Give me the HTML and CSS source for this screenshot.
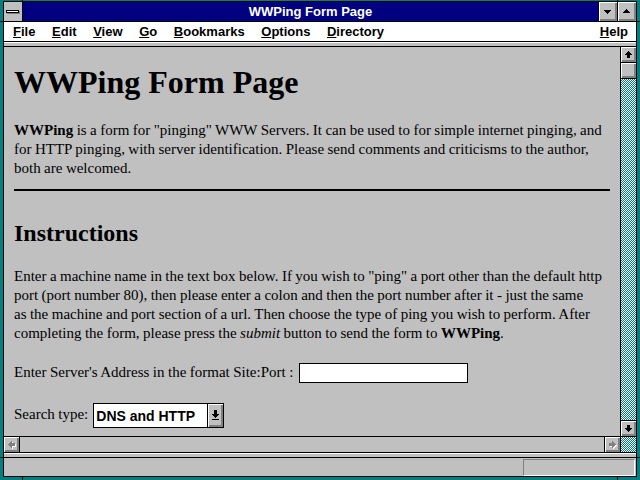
FILE: index.html
```html
<!DOCTYPE html>
<html>
<head lang="en">
    <meta charset="UTF-8">
    <title>WWPing Form Page</title>
    <link rel="stylesheet" href="styles.css">
</head>
<body>
<div id="frame">
    <div id="window">
        <div id="title-bar">
            <div class="sys-menu"><span class="sys-bar"></span></div>
            <div class="caption">WWPing Form Page</div>
            <div class="cap-btn">
                <svg width="18" height="19" viewBox="0 0 18 19" shape-rendering="crispEdges">
                    <rect x="5" y="8" width="7" height="1"/>
                    <rect x="6" y="9" width="5" height="1"/>
                    <rect x="7" y="10" width="3" height="1"/>
                    <rect x="8" y="11" width="1" height="1"/>
                </svg>
            </div>
            <div class="cap-btn">
                <svg width="18" height="19" viewBox="0 0 18 19" shape-rendering="crispEdges">
                    <rect x="8" y="7" width="1" height="1"/>
                    <rect x="7" y="8" width="3" height="1"/>
                    <rect x="6" y="9" width="5" height="1"/>
                    <rect x="5" y="10" width="7" height="1"/>
                </svg>
            </div>
        </div>
        <div id="menu-bar">
            <span class="menu-item"><u>F</u>ile</span>
            <span class="menu-item"><u>E</u>dit</span>
            <span class="menu-item"><u>V</u>iew</span>
            <span class="menu-item"><u>G</u>o</span>
            <span class="menu-item"><u>B</u>ookmarks</span>
            <span class="menu-item"><u>O</u>ptions</span>
            <span class="menu-item"><u>D</u>irectory</span>
            <span class="menu-item help"><u>H</u>elp</span>
        </div>
        <div class="strip"></div>
        <div id="main">
            <div id="content">
                <h1>WWPing Form Page</h1>
                <p class="intro"><b>WWPing</b> is a form for "pinging" WWW Servers. It can be used to for simple internet pinging, and<br>
                    for HTTP pinging, with server identification. Please send comments and criticisms to the author,<br>
                    both are welcomed.</p>
                <hr>
                <h2>Instructions</h2>
                <p class="instr">Enter a machine name in the text box below. If you wish to "ping" a port other than the default http<br>
                    port (port number 80), then please enter a colon and then the port number after it - just the same<br>
                    as the machine and port section of a url. Then choose the type of ping you wish to perform. After<br>
                    completing the form, please press the <i>submit</i> button to send the form to <b>WWPing</b>.</p>
                <form class="ping-form">
                    <div class="row row-site">
                        <label for="site">Enter Server's Address in the format Site:Port :</label>
                        <input id="site" class="site-input" type="text">
                    </div>
                    <div class="row row-type">
                        <label for="type">Search type:</label>
                        <div class="select">
                            <select id="type">
                                <option>DNS and HTTP</option>
                                <option>DNS only</option>
                                <option>HTTP only</option>
                            </select>
                            <span class="drop-btn">
                                <svg width="15" height="23" viewBox="0 0 15 23" shape-rendering="crispEdges">
                                    <rect x="6" y="6" width="3" height="4"/>
                                    <rect x="4" y="10" width="7" height="1"/>
                                    <rect x="5" y="11" width="5" height="1"/>
                                    <rect x="6" y="12" width="3" height="1"/>
                                    <rect x="7" y="13" width="1" height="1"/>
                                    <rect x="4" y="15" width="7" height="1"/>
                                </svg>
                            </span>
                        </div>
                    </div>
                </form>
            </div>
            <div class="vscroll">
                <div class="sb-btn sb-up">
                    <svg width="15" height="15" viewBox="0 0 15 15" shape-rendering="crispEdges">
                        <rect x="7" y="4" width="1" height="1"/>
                        <rect x="6" y="5" width="3" height="1"/>
                        <rect x="5" y="6" width="5" height="1"/>
                        <rect x="4" y="7" width="7" height="1"/>
                        <rect x="6" y="8" width="3" height="3"/>
                    </svg>
                </div>
                <div class="sb-btn sb-thumb"></div>
                <div class="sb-track"></div>
                <div class="sb-btn sb-down">
                    <svg width="15" height="15" viewBox="0 0 15 15" shape-rendering="crispEdges">
                        <rect x="6" y="4" width="3" height="3"/>
                        <rect x="4" y="7" width="7" height="1"/>
                        <rect x="5" y="8" width="5" height="1"/>
                        <rect x="6" y="9" width="3" height="1"/>
                        <rect x="7" y="10" width="1" height="1"/>
                    </svg>
                </div>
            </div>
        </div>
        <div class="hscroll">
            <div class="sb-btn sb-left">
                <svg width="15" height="15" viewBox="0 0 15 15" shape-rendering="crispEdges">
                    <g fill="#fff" transform="translate(1,1)">
                        <rect x="4" y="7" width="1" height="1"/>
                        <rect x="5" y="6" width="1" height="3"/>
                        <rect x="6" y="5" width="1" height="5"/>
                        <rect x="7" y="4" width="1" height="7"/>
                        <rect x="8" y="6" width="3" height="3"/>
                    </g>
                    <g fill="#808080">
                        <rect x="4" y="7" width="1" height="1"/>
                        <rect x="5" y="6" width="1" height="3"/>
                        <rect x="6" y="5" width="1" height="5"/>
                        <rect x="7" y="4" width="1" height="7"/>
                        <rect x="8" y="6" width="3" height="3"/>
                    </g>
                </svg>
            </div>
            <div class="hs-track"></div>
            <div class="sb-btn sb-right">
                <svg width="15" height="15" viewBox="0 0 15 15" shape-rendering="crispEdges">
                    <g fill="#fff" transform="translate(1,1)">
                        <rect x="10" y="7" width="1" height="1"/>
                        <rect x="9" y="6" width="1" height="3"/>
                        <rect x="8" y="5" width="1" height="5"/>
                        <rect x="7" y="4" width="1" height="7"/>
                        <rect x="4" y="6" width="3" height="3"/>
                    </g>
                    <g fill="#808080">
                        <rect x="10" y="7" width="1" height="1"/>
                        <rect x="9" y="6" width="1" height="3"/>
                        <rect x="8" y="5" width="1" height="5"/>
                        <rect x="7" y="4" width="1" height="7"/>
                        <rect x="4" y="6" width="3" height="3"/>
                    </g>
                </svg>
            </div>
            <div class="sb-corner"></div>
        </div>
        <div class="strip"></div>
        <div id="status">
            <div class="status-box"></div>
        </div>
    </div>
</div>
</body>
</html>
```

FILE: styles.css
```css
* {
    margin: 0;
    padding: 0;
    box-sizing: border-box;
}

html, body {
    width: 640px;
    height: 480px;
    overflow: hidden;
    background: #008080;
}

/* teal sizing frame with its corner notches */
#frame {
    width: 640px;
    height: 480px;
    padding: 1px 3px 3px 3px;
    background:
        linear-gradient(#000, #000) 22px 0 / 1px 100% no-repeat,
        linear-gradient(#000, #000) 617px 0 / 1px 100% no-repeat,
        linear-gradient(#000, #000) 0 21px / 100% 1px no-repeat,
        linear-gradient(#000, #000) 0 457px / 100% 1px no-repeat,
        #008080;
}

#window {
    height: 100%;
    border: 1px solid #000;
    background: #c0c0c0;
    display: flex;
    flex-direction: column;
}

/* title bar */
#title-bar {
    height: 20px;
    flex: none;
    display: flex;
    border-bottom: 1px solid #000;
    background: #000080;
}

.sys-menu {
    width: 19px;
    border-right: 1px solid #000;
    background: #c0c0c0;
    display: flex;
    align-items: center;
    justify-content: center;
}

.sys-bar {
    display: block;
    width: 13px;
    height: 3px;
    border: 1px solid #000;
    background: #fff;
    box-shadow: 1px 1px 0 #808080;
    margin: 0 1px 1px 0;
}

.caption {
    flex: 1;
    text-align: center;
    color: #fff;
    font: bold 13px/19px "Liberation Sans", Arial, sans-serif;
}

.cap-btn {
    width: 19px;
    border-left: 1px solid #000;
    background: #c0c0c0;
    box-shadow: inset 1px 1px 0 #fff, inset -1px -1px 0 #808080, inset -2px -2px 0 #808080;
}

.cap-btn svg,
.sb-btn svg,
.drop-btn svg {
    display: block;
}

/* menu */
#menu-bar {
    height: 20px;
    flex: none;
    display: flex;
    gap: 16.6px;
    padding: 0 8px 0 9px;
    background: #fff;
    border-bottom: 1px solid #000;
    font: bold 13px/19px "Liberation Sans", Arial, sans-serif;
    color: #000;
}

.menu-item u {
    text-decoration: underline;
}

.help {
    margin-left: auto;
}

.strip {
    height: 5px;
    flex: none;
    border-top: 1px solid #fff;
    border-bottom: 1px solid #000;
    background: #c0c0c0;
}

/* document area */
#main {
    flex: 1;
    display: flex;
    min-height: 0;
}

#content {
    flex: 1;
    overflow: hidden;
    padding: 0 10px;
    font-family: "Liberation Serif", "Times New Roman", serif;
    font-size: 15px;
    line-height: 19px;
    word-spacing: -0.3px;
    color: #000;
}

h1 {
    margin-top: 17px;
    font-size: 32px;
    line-height: 36px;
    word-spacing: 0;
}

.intro {
    margin-top: 21px;
}

hr {
    margin-top: 11px;
    height: 0;
    border: 0;
    border-top: 2px solid #000;
}

h2 {
    margin-top: 28px;
    font-size: 24px;
    line-height: 28px;
    word-spacing: 0;
}

.instr {
    margin-top: 20px;
}

.row {
    display: flex;
    align-items: flex-start;
    gap: 5px;
}

.row-site {
    margin-top: 19px;
}

.row-site label {
    margin-top: 1px;
}

.site-input {
    margin: 1px 0 0 1px;
    width: 169px;
    height: 20px;
    border: 1px solid #000;
    background: #fff;
    outline: none;
}

.row-type {
    margin-top: 20px;
}

.row-type label {
    margin-top: 2px;
}

.select {
    width: 131px;
    height: 25px;
    display: flex;
    border: 1px solid #000;
    background: #fff;
}

.select select {
    flex: 1;
    min-width: 0;
    -webkit-appearance: none;
    appearance: none;
    border: 0;
    outline: none;
    background: #fff;
    color: #000;
    padding-left: 2px;
    font: bold 14px "Liberation Sans", Arial, sans-serif;
}

.drop-btn {
    width: 16px;
    border-left: 1px solid #000;
    background: #c0c0c0;
    box-shadow: inset 1px 1px 0 #fff, inset -1px -1px 0 #808080, inset -2px -2px 0 #808080;
}

/* scroll bars */
.vscroll {
    width: 16px;
    display: flex;
    flex-direction: column;
    border-left: 1px solid #000;
}

.sb-btn {
    flex: none;
    height: 16px;
    background: #c0c0c0;
    box-shadow: inset 1px 1px 0 #fff, inset -1px -1px 0 #808080, inset -2px -2px 0 #808080;
}

.sb-up,
.sb-thumb {
    border-bottom: 1px solid #000;
}

.sb-down {
    border-top: 1px solid #000;
}

.sb-track,
.sb-corner {
    background: repeating-conic-gradient(#008080 0 25%, #fff 0 50%) 0 0 / 2px 2px;
}

.sb-track {
    flex: 1;
}

.hscroll {
    height: 17px;
    flex: none;
    display: flex;
    border-top: 1px solid #000;
    border-bottom: 1px solid #000;
}

.hscroll .sb-btn {
    width: 16px;
    height: 15px;
}

.sb-left {
    border-right: 1px solid #000;
}

.sb-right {
    border-left: 1px solid #000;
}

.hs-track {
    flex: 1;
    background: #c0c0c0;
}

.sb-corner {
    width: 16px;
    border-left: 1px solid #000;
}

/* status bar */
#status {
    height: 18px;
    flex: none;
    display: flex;
    justify-content: flex-end;
    padding: 1px 1px 0 0;
}

.status-box {
    width: 112px;
    height: 17px;
    border-top: 1px solid #808080;
    border-left: 1px solid #808080;
    border-bottom: 1px solid #fff;
    border-right: 1px solid #fff;
}
```
